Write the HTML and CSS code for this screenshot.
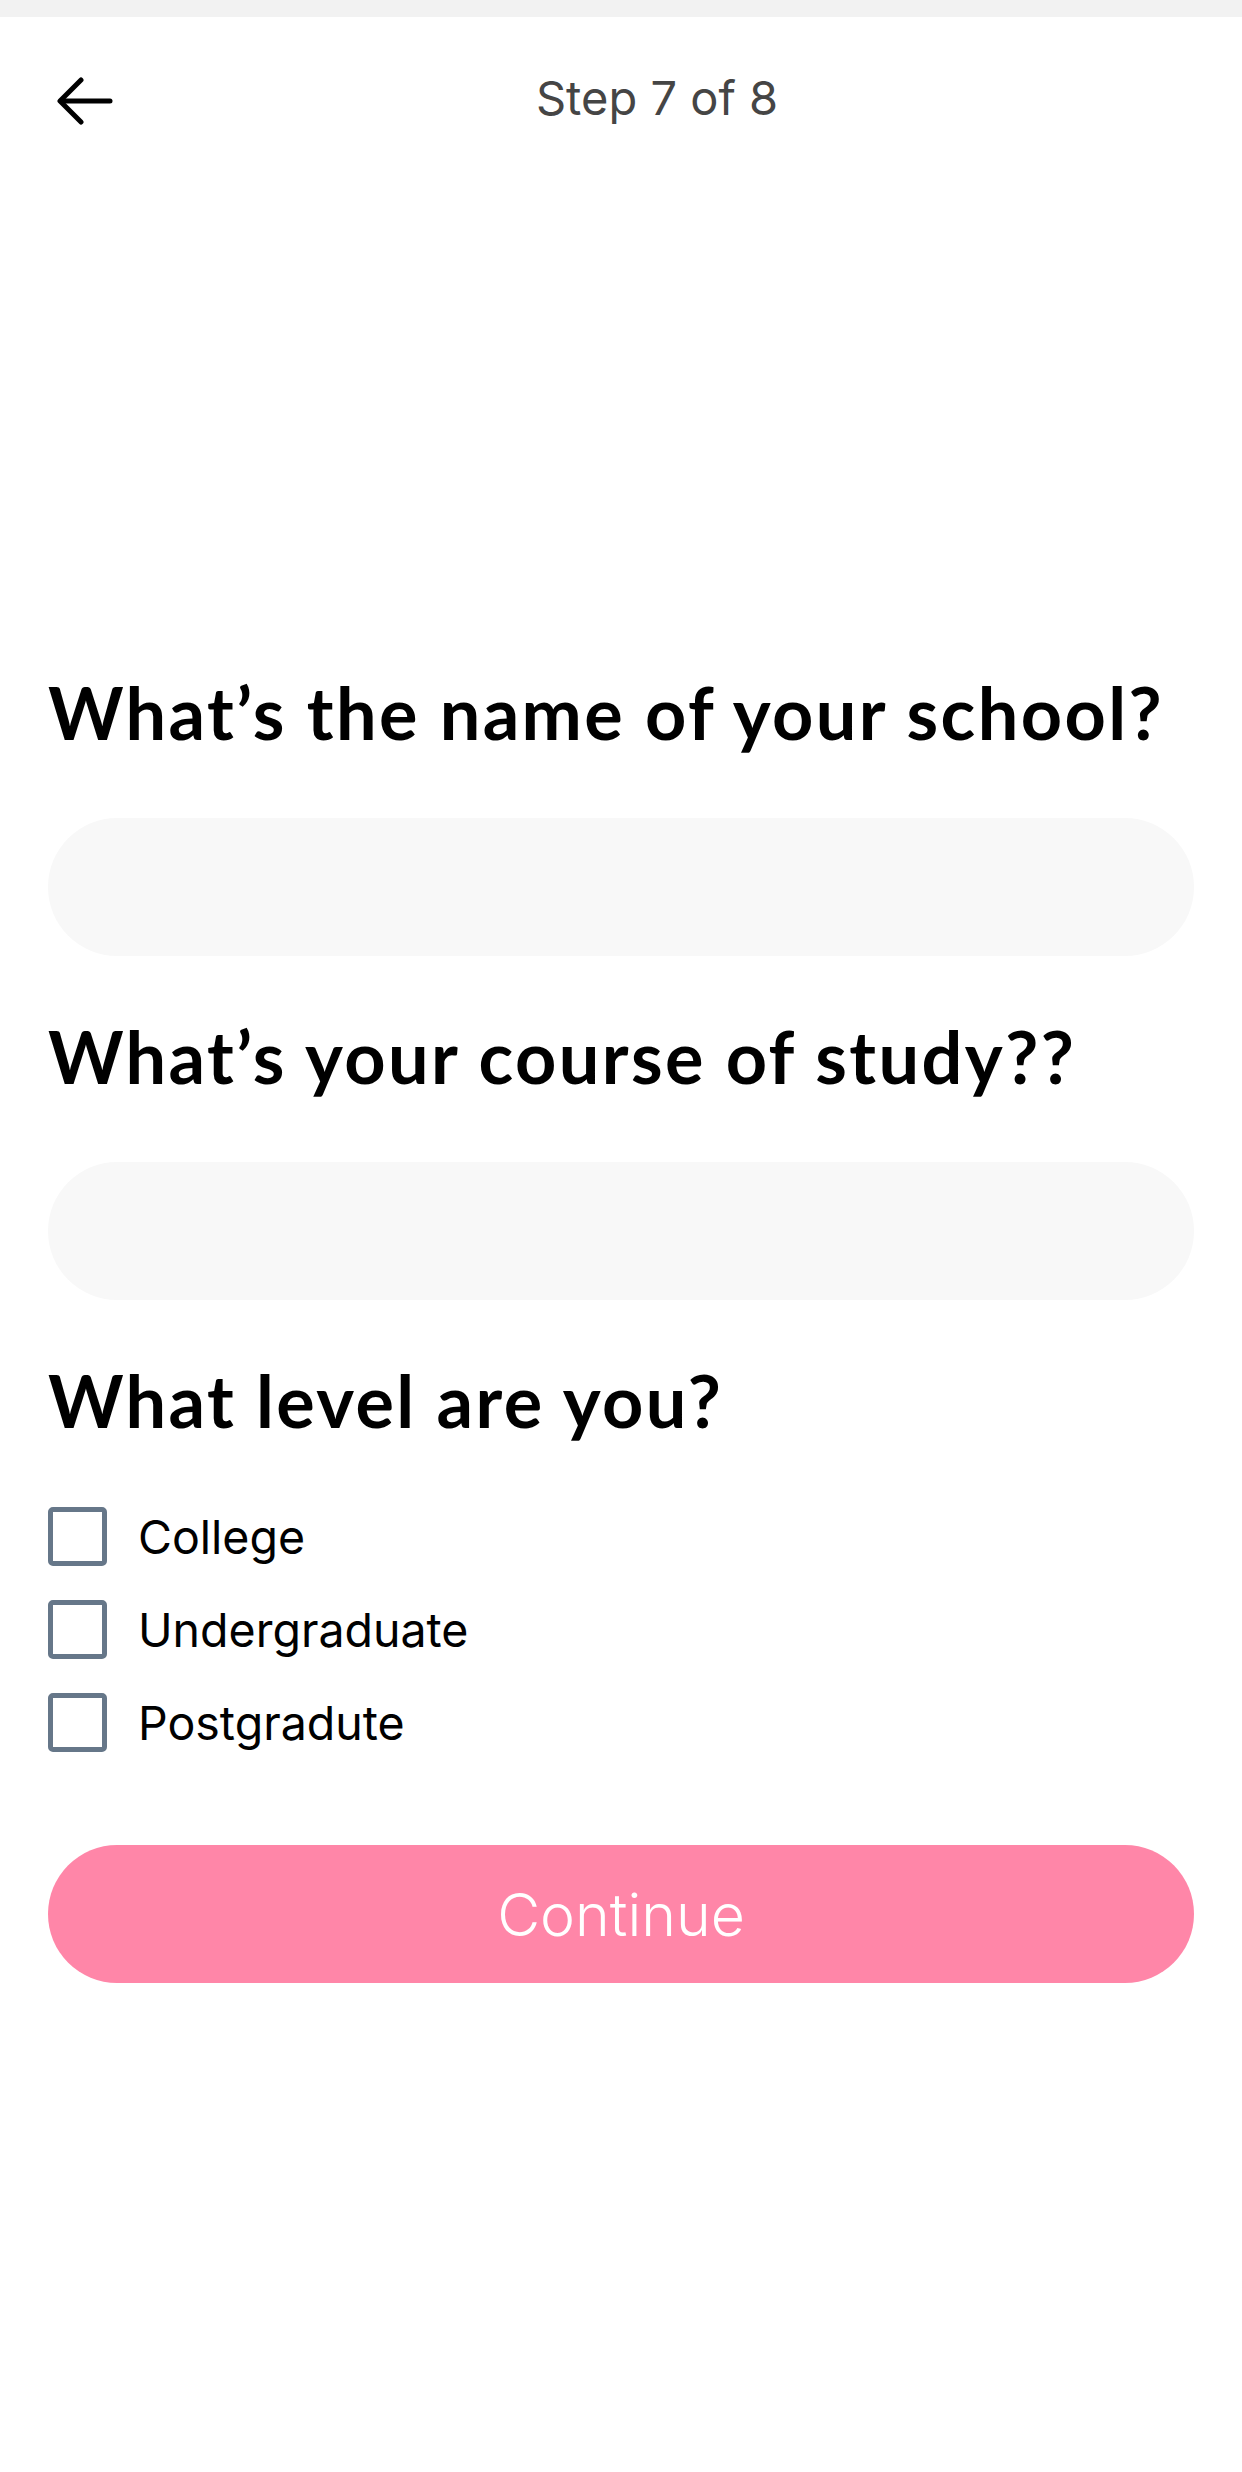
FILE: index.html
```html
<!DOCTYPE html>
<html lang="en">
<head>
<meta charset="utf-8">
<title>Step 7 of 8</title>
<link rel="stylesheet" href="styles.css">
</head>
<body>
<div class="status"></div>
<header class="topbar">
  <button class="back" aria-label="Back">
    <svg width="56" height="48" viewBox="0 0 56 48" fill="none" stroke="#000" stroke-width="5" stroke-linecap="round" stroke-linejoin="round">
      <path d="M53 24H4"/>
      <path d="M24 3L3 24L24 45"/>
    </svg>
  </button>
  <div class="step">Step 7 of 8</div>
</header>
<main class="form">
  <h2 class="question">What’s the name of your school?</h2>
  <input class="field" type="text" aria-label="School name">
  <h2 class="question">What’s your course of study??</h2>
  <input class="field" type="text" aria-label="Course of study">
  <h2 class="question">What level are you?</h2>
  <div class="options">
    <label class="option"><span class="box"></span><span class="label">College</span></label>
    <label class="option"><span class="box"></span><span class="label">Undergraduate</span></label>
    <label class="option"><span class="box"></span><span class="label">Postgradute</span></label>
  </div>
  <button class="continue">Continue</button>
</main>
</body>
</html>
```
FILE: styles.css
```css
* { box-sizing: border-box; }
html, body { margin: 0; padding: 0; background: #fff; }
body { width: 1242px; min-height: 2472px; font-family: "Inter", "Liberation Sans", sans-serif; color: #000; }

.status { height: 17px; background: #f2f2f2; }

.topbar {
  height: 168px;
  padding: 0 48px;
  display: flex;
  align-items: center;
}
.back {
  width: 72px;
  height: 60px;
  padding: 0 0 0 9px;
  border: 0;
  background: none;
  display: flex;
  align-items: center;
}
.step {
  flex: 1;
  text-align: center;
  font-size: 47px;
  color: #454545;
  font-weight: 400;
  margin-top: -8px;
}

.form {
  padding: 484px 48px 0 48px;
  display: flex;
  flex-direction: column;
}
.question {
  margin: 0;
  font-family: "Lato", "Liberation Sans", sans-serif;
  font-weight: 700;
  font-size: 72px;
  line-height: 86px;
  letter-spacing: 2.4px;
  color: #000;
}
.field {
  display: block;
  width: 100%;
  height: 138px;
  margin: 63px 0 57px;
  border: 0;
  border-radius: 69px;
  background: #f8f8f8;
  outline: none;
}
.options {
  margin-top: 64px;
  display: flex;
  flex-direction: column;
  gap: 34px;
}
.option {
  display: flex;
  align-items: center;
  height: 59px;
}
.box {
  width: 59px;
  height: 59px;
  border: 5px solid #667789;
  border-radius: 5px;
  flex: none;
}
.label {
  margin-left: 31px;
  font-size: 46.5px;
  color: #000;
}
.continue {
  margin-top: 93px;
  height: 138px;
  width: 100%;
  border: 0;
  border-radius: 69px;
  background: #ff86a8;
  color: #fff;
  font-family: "Inter", "Liberation Sans", sans-serif;
  font-weight: 300;
  font-size: 59px;
}
```
